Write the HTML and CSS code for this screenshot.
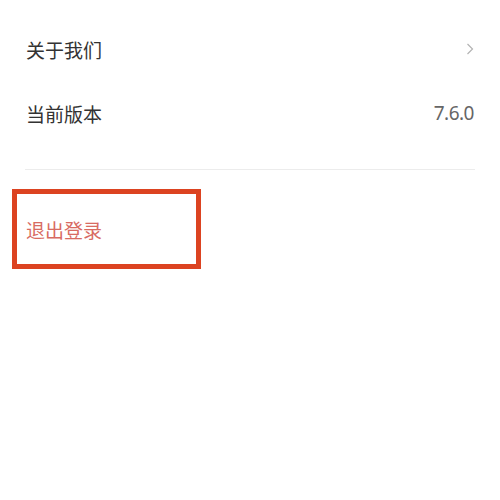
FILE: index.html
```html
<!DOCTYPE html>
<html lang="zh">
<head>
<meta charset="utf-8">
<link rel="stylesheet" href="styles.css">
</head>
<body>
<div class="page">
  <div class="list">
    <div class="row">
      <span class="label">关于我们</span>
      <svg class="chevron" width="8" height="12" viewBox="0 0 8 12"><path d="M1.5 1 L6.5 6 L1.5 11" fill="none" stroke="#b3b3b3" stroke-width="1.2"/></svg>
    </div>
    <div class="row">
      <span class="label">当前版本</span>
      <span class="value">7.6.0</span>
    </div>
  </div>
  <div class="divider"></div>
  <div class="logout">
    <span class="logout-text">退出登录</span>
  </div>
</div>
</body>
</html>
```
FILE: styles.css
```css
html, body {
  margin: 0;
  padding: 0;
  background: #ffffff;
}
.page {
  width: 500px;
  font-family: "Noto Sans", "Noto Sans CJK SC", sans-serif;
}
.list {
  padding: 17px 26px 0 26px;
}
.row {
  height: 64px;
  display: flex;
  align-items: center;
  justify-content: space-between;
}
.label {
  font-family: "Noto Sans CJK SC", sans-serif;
  font-size: 19px;
  color: #333333;
}
.value {
  font-size: 19px;
  color: #666666;
  letter-spacing: -0.5px;
}
.chevron {
  display: block;
}
.divider {
  height: 1px;
  background: #ececec;
  margin: 24px 25px 0 25px;
}
.logout {
  margin: 19px 0 0 12px;
  width: 189px;
  height: 80px;
  box-sizing: border-box;
  border: 5px solid #dc4321;
  display: flex;
  align-items: center;
  padding-left: 9px;
}
.logout-text {
  font-family: "Noto Sans CJK SC", sans-serif;
  font-size: 19px;
  color: #d86b62;
}
```
